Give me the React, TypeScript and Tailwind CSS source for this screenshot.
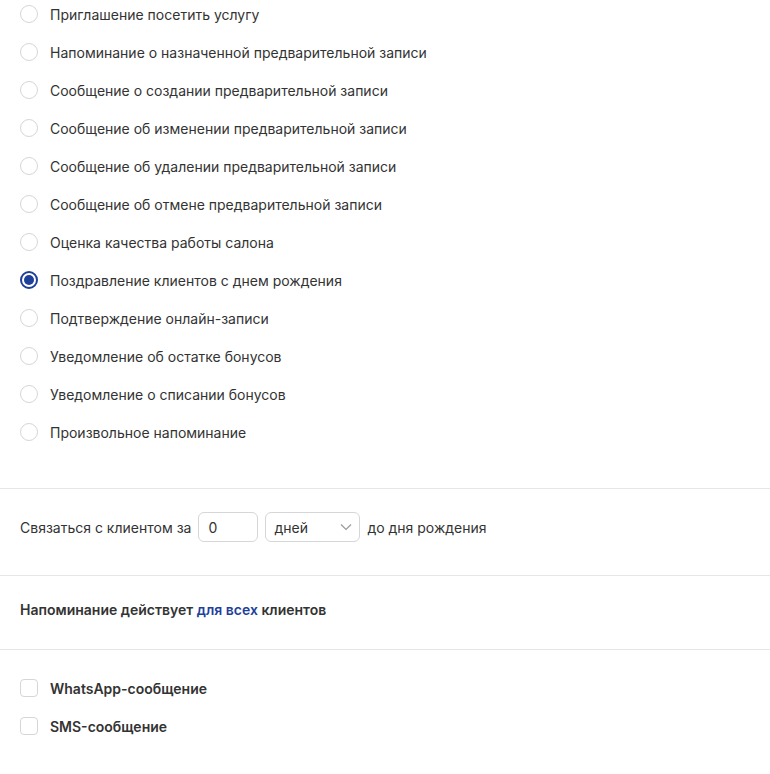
import React from "react";

const items = [
  "Приглашение посетить услугу",
  "Напоминание о назначенной предварительной записи",
  "Сообщение о создании предварительной записи",
  "Сообщение об изменении предварительной записи",
  "Сообщение об удалении предварительной записи",
  "Сообщение об отмене предварительной записи",
  "Оценка качества работы салона",
  "Поздравление клиентов с днем рождения",
  "Подтверждение онлайн-записи",
  "Уведомление об остатке бонусов",
  "Уведомление о списании бонусов",
  "Произвольное напоминание",
];

export default function App() {
  const selected = 7;
  return (
    <div
      className="w-[770px] h-[774px] bg-white text-[14px] text-[#333333] overflow-hidden"
      style={{ fontFamily: "Inter, 'Noto Sans', sans-serif" }}
    >
      <div className="flex flex-col mt-[-5px] pb-[37px]">
        {items.map((t, i) => (
          <div key={i} className="flex items-center h-[38px] pl-[20px] gap-[12px]">
            {i === selected ? (
              <span className="w-[18px] h-[18px] rounded-full border-[2px] border-[#1e3f9a] flex items-center justify-center">
                <span className="w-[10px] h-[10px] rounded-full bg-[#1e3f9a]" />
              </span>
            ) : (
              <span className="w-[18px] h-[18px] rounded-full border border-[#d6d6d6]" />
            )}
            <span>{t}</span>
          </div>
        ))}
      </div>
      <div className="border-t border-[#e6e6e6]" />
      <div className="flex items-center pt-[23px] pb-[33px] pl-[20px] gap-[7px]">
        <span>Связаться с клиентом за</span>
        <div className="w-[60px] h-[30px] rounded-[6px] border border-[#d6d6d6] flex items-center pl-[9px]">0</div>
        <div className="w-[95px] h-[30px] rounded-[6px] border border-[#d6d6d6] flex items-center justify-between pl-[8px] pr-[5px]">
          <span>дней</span>
          <svg width="16" height="16" viewBox="0 0 16 16" fill="none">
            <path d="M3 5.5l5 5 5-5" stroke="#9a9a9a" strokeWidth="1.2" />
          </svg>
        </div>
        <span>до дня рождения</span>
      </div>
      <div className="border-t border-[#e6e6e6]" />
      <div className="h-[73px] pt-[24px] pl-[20px] font-semibold leading-[20px]">
        <span>
          Напоминание действует <span className="text-[#1e3f9a]">для всех</span> клиентов
        </span>
      </div>
      <div className="border-t border-[#e6e6e6]" />
      <div className="flex flex-col pt-[19px]">
        {["WhatsApp-сообщение", "SMS-сообщение"].map((t) => (
          <div key={t} className="flex items-center h-[38px] pl-[20px] gap-[12px] font-semibold">
            <span className="w-[18px] h-[18px] rounded-[4px] border border-[#d6d6d6]" />
            <span>{t}</span>
          </div>
        ))}
      </div>
    </div>
  );
}
